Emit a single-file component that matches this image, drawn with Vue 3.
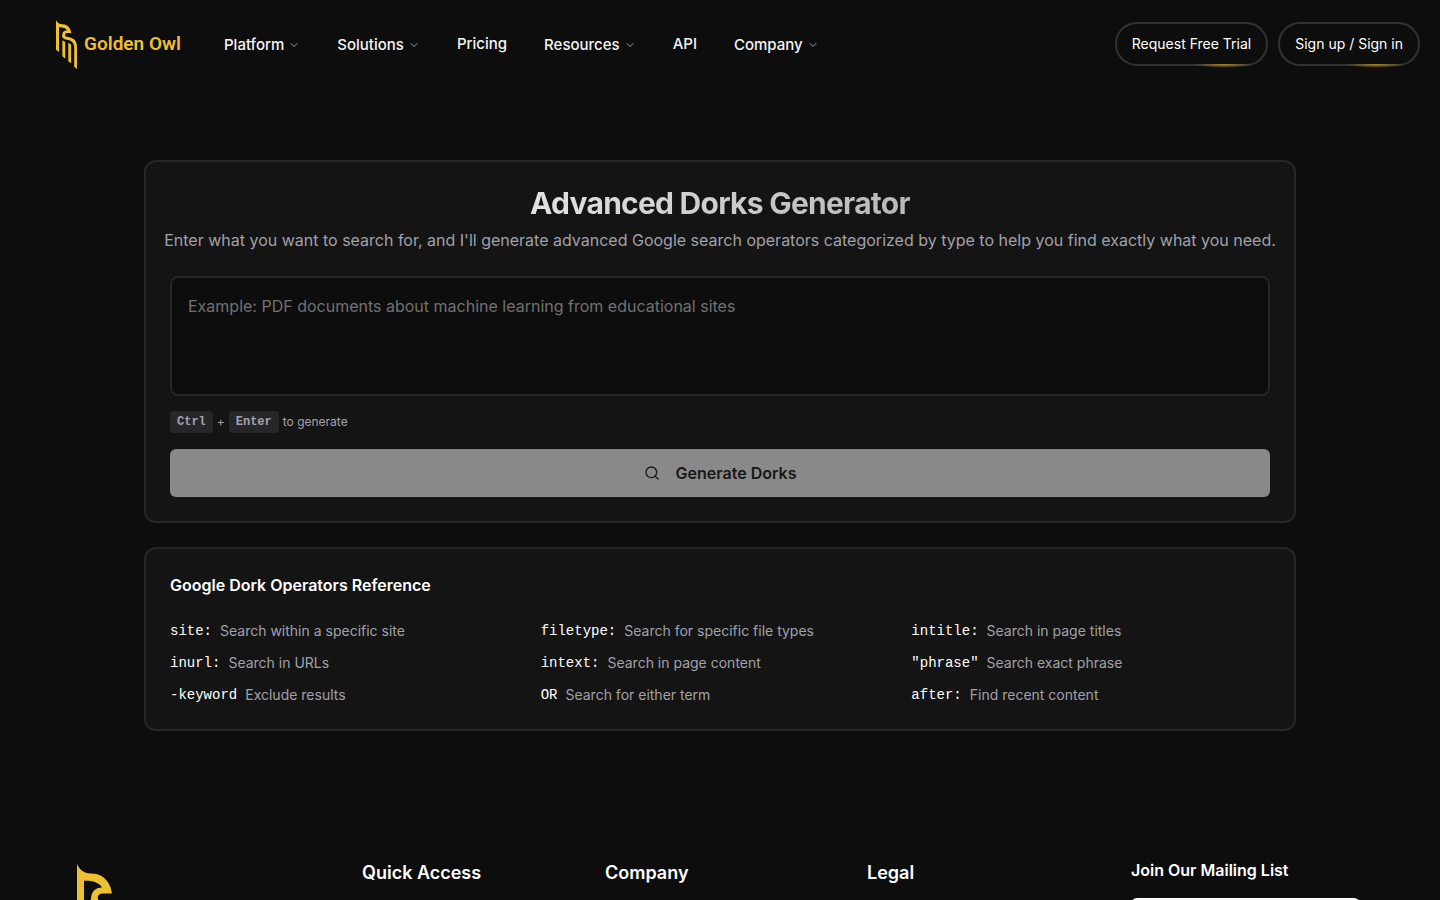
<script setup>
import { ref } from 'vue'

const query = ref('')
const owl = 'M0 0C3 6 6 9 14 9.5C28 9 34 21 35 29.5H25C20 30 19 36 24 38C36 40 48 42 48 62V112L41.5 107V62C41 50 34 46 24 45C16 43 13 40 14 34C15 27 18 24 25 23.5C22 18 15 16.5 7 16.7V73L0 68ZM14.5 46L21 50V88L14.5 83ZM28 52L34.5 56V99L28 94Z'
const nav = [
  { label: 'Platform', menu: true },
  { label: 'Solutions', menu: true },
  { label: 'Pricing', menu: false },
  { label: 'Resources', menu: true },
  { label: 'API', menu: false },
  { label: 'Company', menu: true }
]
const operators = [
  ['site:', 'Search within a specific site'],
  ['filetype:', 'Search for specific file types'],
  ['intitle:', 'Search in page titles'],
  ['inurl:', 'Search in URLs'],
  ['intext:', 'Search in page content'],
  ['"phrase"', 'Search exact phrase'],
  ['-keyword', 'Exclude results'],
  ['OR', 'Search for either term'],
  ['after:', 'Find recent content']
]
</script>

<template>
  <div class="page">
    <header class="header">
      <a href="#" class="brand" aria-label="Golden Owl">
        <svg class="brand-mark" viewBox="0 0 48 112" aria-hidden="true"><path :d="owl" /></svg>
        <span class="brand-name">Golden Owl</span>
      </a>
      <nav class="nav">
        <template v-for="item in nav" :key="item.label">
          <button v-if="item.menu" type="button" class="nav-item nav-menu">
            {{ item.label }}
            <svg class="chevron" viewBox="0 0 24 24" aria-hidden="true"><path d="m6 9 6 6 6-6" /></svg>
          </button>
          <a v-else href="#" class="nav-item">{{ item.label }}</a>
        </template>
      </nav>
      <div class="actions">
        <button type="button" class="pill">Request Free Trial</button>
        <button type="button" class="pill">Sign up / Sign in</button>
      </div>
    </header>

    <main class="main">
      <section class="card">
        <h1>Advanced Dorks Generator</h1>
        <p class="intro">Enter what you want to search for, and I'll generate advanced Google search operators categorized by type to help you find exactly what you need.</p>
        <textarea v-model="query" aria-label="Search description" placeholder="Example: PDF documents about machine learning from educational sites"></textarea>
        <p class="hint"><kbd>Ctrl</kbd><span>+</span><kbd>Enter</kbd><span>to generate</span></p>
        <button type="button" class="generate" :disabled="!query">
          <svg viewBox="0 0 24 24" aria-hidden="true"><circle cx="11" cy="11" r="8" /><path d="m21 21-4.3-4.3" /></svg>
          Generate Dorks
        </button>
      </section>

      <section class="card">
        <h2>Google Dork Operators Reference</h2>
        <ul class="operators">
          <li v-for="[name, text] in operators" :key="name"><code>{{ name }}</code><span>{{ text }}</span></li>
        </ul>
      </section>
    </main>

    <footer class="footer">
      <svg class="footer-mark" viewBox="0 0 48 112" aria-hidden="true"><path :d="owl" /></svg>
      <h3>Quick Access</h3>
      <h3>Company</h3>
      <h3>Legal</h3>
      <div class="mailing">
        <label for="email">Join Our Mailing List</label>
        <input id="email" type="email">
      </div>
    </footer>
  </div>
</template>

<style>
body { margin: 0; background: #0d0d0d; }
</style>

<style scoped>
.page {
  height: 100vh;
  overflow: hidden;
  color: #fff;
  background: #0d0d0d;
  font-family: Inter, "Liberation Sans", sans-serif;
}
* { box-sizing: border-box; }
button { font-family: inherit; cursor: pointer; }
a { color: inherit; text-decoration: none; }
.header {
  display: flex;
  align-items: center;
  height: 88px;
  padding: 0 20px 0 56px;
}
.brand { display: flex; align-items: center; width: 128px; gap: 7px; color: #edbf33; }
.brand-mark { width: 21px; height: 49px; flex: none; }
.brand-mark, .footer-mark { fill: #edbf33; }
.brand-name { font: 600 19px/24px Roboto, sans-serif; white-space: nowrap; }
.nav { display: flex; align-items: center; gap: 37px; margin-left: 40px; }
.nav-item {
  display: flex;
  align-items: center;
  gap: 4px;
  padding: 0;
  border: 0;
  background: none;
  color: #f4f4f5;
  font-size: 15px;
  font-weight: 500;
  line-height: 24px;
}
.nav-menu { padding-top: 2px; }
.chevron { width: 12px; height: 12px; fill: none; stroke: #a1a1aa; stroke-width: 2; stroke-linecap: round; stroke-linejoin: round; }
.actions { display: flex; gap: 10px; margin-left: auto; }
.pill {
  position: relative;
  height: 44px;
  padding: 0 15px 2px;
  border: 2px solid #333;
  border-radius: 22px;
  background: #0d0d0d;
  color: #fff;
  font-size: 14px;
}
.pill::after {
  content: "";
  position: absolute;
  right: 12px;
  bottom: -4px;
  width: 60px;
  height: 4px;
  background: radial-gradient(ellipse 50% 100% at top, #a88a32, transparent);
}
.main { display: grid; gap: 24px; width: 80%; margin: 72px auto 0; }
.card { padding: 24px; border: 2px solid #262626; border-radius: 12px; background: #141414; }
h1, h2, h3, p, ul { margin: 0; }
h1 {
  width: fit-content;
  margin: 0 auto;
  font-size: 30px;
  font-weight: 700;
  line-height: 34px;
  letter-spacing: -0.025em;
  color: transparent;
  background: linear-gradient(to right, #e2e2e2, #b8b8b8);
  background-clip: text;
}
.intro { margin: 8px -16px 0; color: #a1a1aa; text-align: center; font-size: 16px; line-height: 24px; }
textarea {
  display: block;
  width: 100%;
  height: 120px;
  margin-top: 24px;
  padding: 16px;
  border: 2px solid #262626;
  border-radius: 8px;
  outline: 0;
  resize: none;
  background: #0d0d0d;
  color: #fff;
  font: 16px/24px Inter, "Liberation Sans", sans-serif;
}
textarea::placeholder { color: #717171; }
.hint { display: flex; align-items: center; gap: 4px; margin-top: 15px; color: #a1a1aa; font-size: 12px; line-height: 22px; }
kbd { padding: 0 7px; border-radius: 4px; background: #27272a; font: 700 12px/22px "Liberation Mono", monospace; }
.generate {
  display: flex;
  align-items: center;
  justify-content: center;
  gap: 16px;
  width: 100%;
  height: 48px;
  margin-top: 16px;
  border: 0;
  border-radius: 6px;
  background: #898989;
  color: #171717;
  font-size: 16px;
  font-weight: 600;
}
.generate svg { width: 16px; height: 16px; fill: none; stroke: currentColor; stroke-width: 2; stroke-linecap: round; }
h2 { font-size: 16px; font-weight: 600; line-height: 24px; }
.operators { display: grid; grid-template-columns: repeat(3, 1fr); gap: 12px; margin-top: 24px; padding: 0; list-style: none; }
.operators li { display: flex; gap: 8px; font-size: 14px; line-height: 20px; color: #a1a1aa; }
code { color: #fff; font: 14px/20px "Liberation Mono", monospace; }
.footer {
  display: grid;
  grid-template-columns: 285px 243px 262px 264px 1fr;
  align-items: start;
  margin-top: 127px;
  padding: 0 80px 0 77px;
}
.footer-mark { width: 48px; height: 112px; margin-top: 6px; }
h3 { font-size: 18px; font-weight: 600; line-height: 30px; }
.footer { align-items: start; }
.footer-mark { margin-top: 6px; }
.mailing { display: grid; gap: 16px; }
.mailing label { font-size: 16px; font-weight: 600; line-height: 24px; }
.mailing input { height: 40px; border: 0; border-radius: 6px; background: #fff; }
</style>
